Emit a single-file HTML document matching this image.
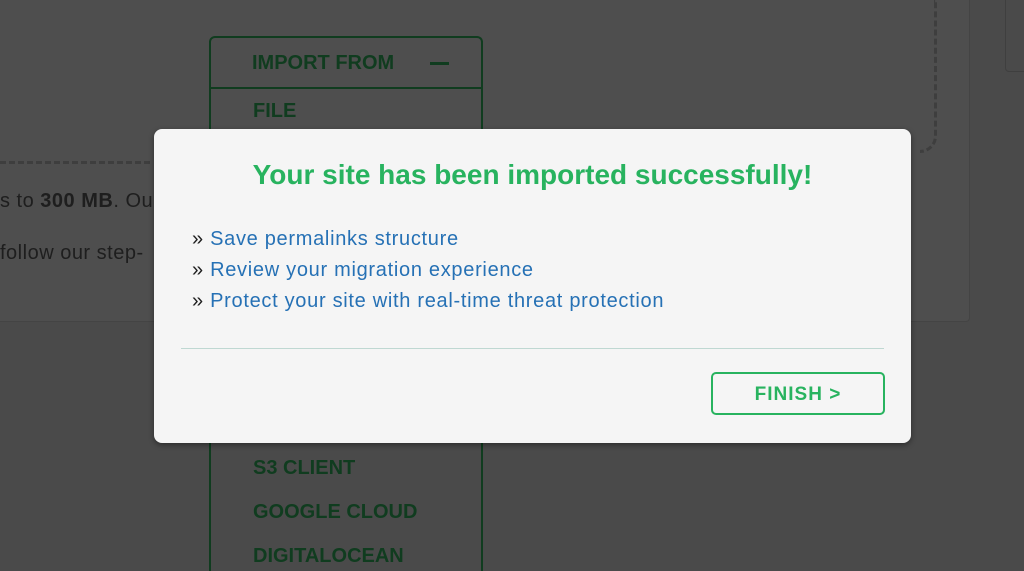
<!DOCTYPE html>
<html style="overflow:hidden;height:571px"><head><style>
body{margin:0;width:1024px;height:571px;overflow:hidden;background:#4a4a4a;font-family:"Liberation Sans",sans-serif;position:relative}
.panel{position:absolute;left:-5px;top:-5px;width:973px;height:325px;background:#4e4e4e;border:1px solid #444;border-radius:4px}
.dash{position:absolute;left:0;top:161px;width:150px;border-top:3px dashed #3e3e3e}
.dash2{position:absolute;left:920px;top:0;width:14px;height:150px;border-right:3px dashed #3e3e3e;border-bottom:3px dashed #3e3e3e;border-bottom-right-radius:20px}
.t{position:absolute;color:#1e1e1e;font-size:20px;letter-spacing:0.5px}
.dd{position:absolute;left:209px;top:36px;width:270px;height:533px;border:2px solid #103c1f;border-bottom:none;border-radius:6px 6px 0 0}
.dd .h{height:49px;border-bottom:2px solid #103c1f;font-weight:bold;color:#103c1f;font-size:20px;line-height:51px;padding-left:41px}
.dd .h span{position:absolute;left:219px;top:24px;width:19px;height:3px;background:#103c1f}
.it{position:absolute;left:42px;font-weight:bold;color:#103c1f;font-size:20px}
.rbox{position:absolute;left:1005px;top:-5px;width:30px;height:75px;border:1px solid #3f3f3f;border-radius:4px}
.modal{position:absolute;left:154px;top:129px;width:757px;height:314px;background:#f5f5f5;border-radius:8px;box-shadow:0 2px 6px rgba(0,0,0,.4)}
.title{position:absolute;left:0;right:0;top:30px;text-align:center;color:#28b35f;font-size:28px;font-weight:bold}
.links{position:absolute;left:38px;top:95px;font-size:20px;line-height:31px;color:#1e1e1e;letter-spacing:0.7px}
.links a{color:#2671b5;text-decoration:none}
.hr{position:absolute;left:27px;top:219px;width:703px;height:1px;background:#bfd8d2}
.btn{position:absolute;left:557px;top:243px;width:170px;height:39px;border:2px solid #28b35f;border-radius:5px;color:#28b35f;font-weight:bold;font-size:19px;text-align:center;line-height:42px;letter-spacing:1px}
</style></head><body>
<div class="panel"></div>
<div class="rbox"></div>
<div class="dash"></div>
<div class="dash2"></div>
<div class="t" style="left:0;top:190px">s to <b>300 MB</b>. Ou</div>
<div class="t" style="left:0;top:242px">follow our step-</div>
<div class="dd"><div class="h">IMPORT FROM<span></span></div>
<div class="it" style="top:62px">FILE</div>
<div class="it" style="top:419px">S3 CLIENT</div>
<div class="it" style="top:463px">GOOGLE CLOUD</div>
<div class="it" style="top:507px">DIGITALOCEAN</div>
</div>
<div class="modal">
<div class="title">Your site has been imported successfully!</div>
<div class="links">» <a>Save permalinks structure</a><br>» <a>Review your migration experience</a><br>» <a>Protect your site with real-time threat protection</a></div>
<div class="hr"></div>
<div class="btn">FINISH &gt;</div>
</div>
</body></html>
